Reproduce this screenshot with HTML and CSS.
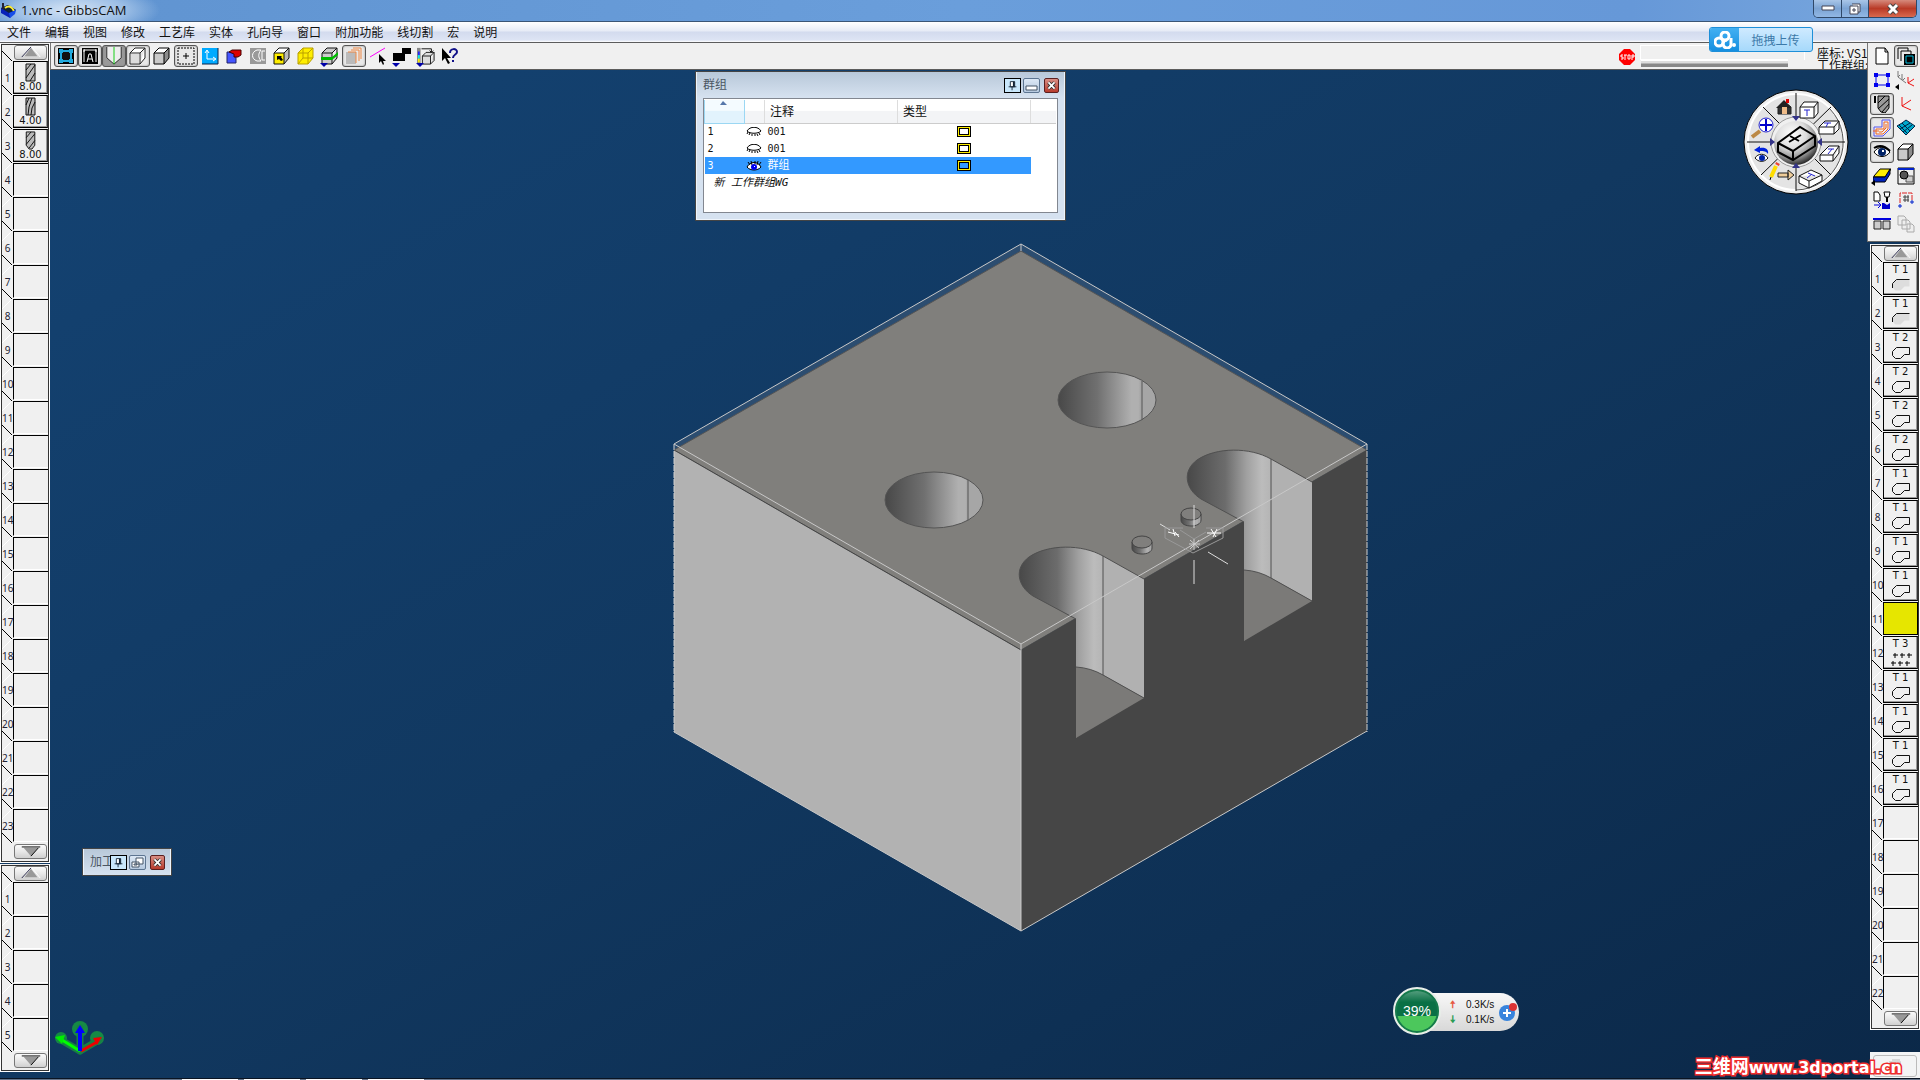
FILE: index.html
```html
<!DOCTYPE html>
<html lang="zh-CN">
<head>
<meta charset="utf-8">
<title>1.vnc - GibbsCAM</title>
<link rel="stylesheet" href="styles.css">
</head>
<body>
<svg class="defs" aria-hidden="true">
  <defs>
    <linearGradient id="bore"><stop offset="0" stop-color="#484848"/><stop offset=".4" stop-color="#707070"/><stop offset=".75" stop-color="#b0b0b0"/><stop offset=".82" stop-color="#b0b0b0"/><stop offset=".84" stop-color="#a6a6a6"/><stop offset="1" stop-color="#a6a6a6"/></linearGradient>
    <linearGradient id="slotwall" gradientUnits="userSpaceOnUse" x1="1019" y1="0" x2="1104" y2="0"><stop offset="0" stop-color="#484848"/><stop offset=".45" stop-color="#6c6c6c"/><stop offset=".7" stop-color="#a0a0a0"/><stop offset=".88" stop-color="#bcbcbc"/><stop offset="1" stop-color="#b4b4b4"/></linearGradient>
    <radialGradient id="ball" cx=".4" cy=".3" r=".75"><stop offset="0" stop-color="#fff"/><stop offset=".45" stop-color="#ddd"/><stop offset=".75" stop-color="#888"/><stop offset="1" stop-color="#111"/></radialGradient>
  </defs>
  <symbol id="cube" viewBox="0 0 18 18"><path d="M1 6h10v11H1z" fill="#c9c9c9"/><path d="M1 6l5-5h10l-5 5z" fill="#fff"/><path d="M11 6l5-5v10l-5 6z" fill="#8c8c8c"/><path d="M1 6h10v11H1zl5-5h10l-5 5M16 1v10l-5 6" fill="none" stroke="#000"/></symbol>
  <symbol id="up" viewBox="0 0 22 13"><path d="M11 2l7 9H4z" fill="#999"/><path d="M1 12L11 1" stroke="#224" fill="none"/><path d="M12 1l9 11" stroke="#fff" fill="none"/></symbol>
  <symbol id="down" viewBox="0 0 22 13"><path d="M3 2h16l-8 9z" fill="#999"/><path d="M1 1h20" stroke="#000"/><path d="M19 2l-8 9" stroke="#000"/></symbol>
  <symbol id="profile" viewBox="0 0 20 14"><path d="M5.500 1.500h13v7h-5l-4 4h-5l-3-3v-4z" fill="none" stroke="#111"/></symbol>
  <symbol id="profile-done" viewBox="0 0 20 14"><path d="M5.500 1.500h13v7h-5l-4 4h-5l-3-3v-4z" fill="#ddd"/><path d="M1.500 10v-4.500l4-4h13" fill="none" stroke="#111"/></symbol>
  <symbol id="pin" viewBox="0 0 17 15"><path d="M6 3h5v6H6zM4 9h9M8 9v4" fill="#fff" stroke="#123"/><path d="M9 3h2v6H9z" fill="#123"/></symbol>
  <symbol id="cross" viewBox="0 0 15 15"><path d="M4 4l7 7M11 4l-7 7" stroke="#333" stroke-width="4"/><path d="M4 4l7 7M11 4l-7 7" stroke="#fff" stroke-width="2"/></symbol>
  <symbol id="group" viewBox="0 0 14 11"><path d="M0 0h14v11H0z"/><path d="M1 1h12v9H1z" fill="#fe0"/><path d="M2 2h10v7H2z"/><path d="M3 3h8v5H3z" class="hole"/></symbol>
  <symbol id="shut" viewBox="0 0 16 10"><path d="M1 4c3-5 11-5 14 0-3 3-11 3-14 0zM2 5l-1 2m3-1L3 8m3-1v2m3-2v2m2-2l1 2m1-3l1 2" fill="none" stroke="#000"/></symbol>
  <symbol id="open" viewBox="0 0 16 10"><path d="M1 6c3-6 11-6 14 0-3 4-11 4-14 0z" fill="#fff" stroke="#000"/><path d="M2 1l2 3m1-4l1 4m3-4v3m3-3l-1 4m4-3l-2 3" stroke="#000"/><circle cx="8" cy="6" r="3" fill="#00e"/><path d="M8 5h1v1H8z" fill="#fff"/></symbol>
</svg>

<header class="titlebar">
  <svg class="app" width="16" height="17" viewBox="0 0 16 17"><path d="M1 6l7-3 8 5-6 8-9-5z" fill="#0720b8"/><path d="M1 6l7-3 8 5-7 3z" fill="#123"/><path d="M5 6c4-3 7-1 9 3" fill="none" stroke="#fe3" stroke-width="2"/><path d="M3 1v6" stroke="#223" stroke-width="2"/><path d="M9 11l7-3-1 4-5 4z" fill="#164de8"/></svg>
  <h1>1.vnc - GibbsCAM</h1>
  <div class="winctl">
    <button aria-label="最小化"><svg width="14" height="7" viewBox="0 0 14 7"><path d="M1 1h12v4H1z" fill="#fff" stroke="#445"/></svg></button>
    <button aria-label="还原"><svg width="12" height="12" viewBox="0 0 12 12"><path d="M3 1h8v8h-2M1 3h8v8H1zM4 6h2v2H4z" fill="#fff" stroke="#445"/></svg></button>
    <button class="close" aria-label="关闭"><svg width="14" height="12" viewBox="0 0 14 12"><path d="M3 2l8 8M11 2l-8 8" stroke="#444" stroke-width="5"/><path d="M3 2l8 8M11 2l-8 8" stroke="#fff" stroke-width="3"/></svg></button>
  </div>
</header>

<nav class="menubar">
  <button>文件</button><button>编辑</button><button>视图</button><button>修改</button><button>工艺库</button><button>实体</button><button>孔向导</button><button>窗口</button><button>附加功能</button><button>线切割</button><button>宏</button><button>说明</button>
</nav>

<button class="upload"><span class="cloud"><svg width="22" height="18" viewBox="0 0 22 18"><g fill="none" stroke="#fff" stroke-width="3"><circle cx="5" cy="11" r="4"/><circle cx="11" cy="5" r="4"/><path d="M13 9a4 4 0 1 0 4 5V7"/></g><circle cx="20" cy="14" r="2" fill="#fff"/></svg></span><span class="uptext">拖拽上传</span></button>

<main class="workspace">
  <aside class="dock">
    <section class="rack" aria-label="刀具">
      <div class="cap top"><i></i><button aria-label="上翻"><svg width="22" height="12"><use href="#up"/></svg></button></div>
      <ol>
        <li><b>1</b><button class="tile tool"><svg width="12" height="19" viewBox="0 0 12 19"><path d="M1 1h9v17H1z" fill="#bbb" stroke="#111"/><path d="M1 7l5-6M1 15L10 2M5 18l5-8" stroke="#111"/></svg>8.00</button></li>
        <li><b>2</b><button class="tile tool"><svg width="12" height="19" viewBox="0 0 12 19"><path d="M1 1h9v17H1z" fill="#bbb" stroke="#111"/><path d="M1 8l3-7M3 18l1-8 3-9M6 18l1-7 3-6" fill="none" stroke="#111"/></svg>4.00</button></li>
        <li><b>3</b><button class="tile tool"><svg width="12" height="19" viewBox="0 0 12 20"><path d="M1 1h9v14l-3 4H4l-3-4z" fill="#bbb" stroke="#111"/><path d="M1 7l5-6M1 14L10 3M4 18l6-8" stroke="#111"/></svg>8.00</button></li>
        <li><b>4</b><button class="tile" aria-label="刀具 4"></button></li>
        <li><b>5</b><button class="tile" aria-label="刀具 5"></button></li>
        <li><b>6</b><button class="tile" aria-label="刀具 6"></button></li>
        <li><b>7</b><button class="tile" aria-label="刀具 7"></button></li>
        <li><b>8</b><button class="tile" aria-label="刀具 8"></button></li>
        <li><b>9</b><button class="tile" aria-label="刀具 9"></button></li>
        <li><b>10</b><button class="tile" aria-label="刀具 10"></button></li>
        <li><b>11</b><button class="tile" aria-label="刀具 11"></button></li>
        <li><b>12</b><button class="tile" aria-label="刀具 12"></button></li>
        <li><b>13</b><button class="tile" aria-label="刀具 13"></button></li>
        <li><b>14</b><button class="tile" aria-label="刀具 14"></button></li>
        <li><b>15</b><button class="tile" aria-label="刀具 15"></button></li>
        <li><b>16</b><button class="tile" aria-label="刀具 16"></button></li>
        <li><b>17</b><button class="tile" aria-label="刀具 17"></button></li>
        <li><b>18</b><button class="tile" aria-label="刀具 18"></button></li>
        <li><b>19</b><button class="tile" aria-label="刀具 19"></button></li>
        <li><b>20</b><button class="tile" aria-label="刀具 20"></button></li>
        <li><b>21</b><button class="tile" aria-label="刀具 21"></button></li>
        <li><b>22</b><button class="tile" aria-label="刀具 22"></button></li>
        <li><b>23</b><button class="tile" aria-label="刀具 23"></button></li>
      </ol>
      <div class="cap"><i></i><button aria-label="下翻"><svg width="22" height="12"><use href="#down"/></svg></button></div>
    </section>
    <section class="rack" aria-label="工序">
      <div class="cap top"><i></i><button aria-label="上翻"><svg width="22" height="12"><use href="#up"/></svg></button></div>
      <ol>
        <li><b>1</b><button class="tile" aria-label="工序 1"></button></li>
        <li><b>2</b><button class="tile" aria-label="工序 2"></button></li>
        <li><b>3</b><button class="tile" aria-label="工序 3"></button></li>
        <li><b>4</b><button class="tile" aria-label="工序 4"></button></li>
        <li><b>5</b><button class="tile" aria-label="工序 5"></button></li>
      </ol>
      <div class="cap"><i></i><button aria-label="下翻"><svg width="22" height="12"><use href="#down"/></svg></button></div>
    </section>
  </aside>

  <div class="center">
    <div class="toolbar">
      <div class="tools">
        <button class="on" aria-label="工作群组"><svg viewBox="0 0 18 18"><path d="M1 1h16v16H1z"/><path d="M4 4h10v10H4z" fill="#111" stroke="#2ad" stroke-width="2"/><path d="M2 2h4v4H2zm10 0h4v4h-4zM2 12h4v4H2zm10 0h4v4h-4z" fill="#2ad"/></svg></button>
        <button class="on" aria-label="标注"><svg viewBox="0 0 18 18"><path d="M1 1h16v16H1z"/><path d="M3 15V3h12v12M3 2v3m12-3v3M6 15l2-8h2l2 8M7 12h4" fill="none" stroke="#fff"/></svg></button>
        <button class="on grey" aria-label="刀尖"><svg viewBox="0 0 18 20"><path d="M1 0v12l8 7 8-7V0z" fill="#eee"/><path d="M1 0v12l8 7 8-7V0" fill="none" stroke="#222"/><path d="M9 0v19" stroke="#0c0"/></svg></button>
        <button class="on" aria-label="透明体"><svg viewBox="0 0 18 18"><path d="M1 6h10v11H1zl5-5h10l-5 5M16 1v10l-5 6" fill="#fff" stroke="#222"/><path d="M2 7h8v9H2z" fill="#ddd"/></svg></button>
        <button aria-label="实体"><svg><use href="#cube"/></svg></button>
        <button class="on" aria-label="中心"><svg viewBox="0 0 18 18"><path d="M1 1h16v16H1z" fill="none" stroke="#000" stroke-dasharray="2 1"/><path d="M9 6v6M6 9h6" stroke="#000"/></svg></button>
        <button aria-label="坐标系"><svg viewBox="0 0 18 18"><path d="M1 1h16v16H1z" fill="#0af"/><path d="M6 4v8h8M4 6l2-3 2 3m4 4l3 2-3 2" fill="none" stroke="#fff"/><path d="M1 17h16V1" fill="none" stroke="#124"/></svg></button>
        <button aria-label="渲染"><svg viewBox="0 0 18 18"><path d="M2 5h9v11H2z" fill="#45f" stroke="#226"/><path d="M4 5l3-2h9v5l-3 2H9V7z" fill="#d00" stroke="#400"/></svg></button>
        <button aria-label="工序"><svg viewBox="0 0 18 18"><path d="M1 1h16v16H1z" fill="#999"/><path d="M16 4h-3v9h3M12 3H8c-6 2-6 9 0 11h4c-3-4-3-7 0-11z" fill="none" stroke="#fff"/></svg></button>
        <button aria-label="选择体"><svg viewBox="0 0 18 18"><path d="M1 6l5-5h10l-5 5z" fill="#fff"/><path d="M11 6l5-5v10l-5 6z" fill="#bbb"/><path d="M1 6h10v11H1z" fill="#fe0"/><path d="M1 6h10v11H1zl5-5h10l-5 5M16 1v10l-5 6" fill="none" stroke="#111"/><path d="M4 9h5l-1 1 2 3-2 1-2-2-2 1z"/></svg></button>
        <button aria-label="线框体"><svg viewBox="0 0 18 18"><path d="M1 6l5-5h10v10l-5 6H1z" fill="#fe0"/><path d="M1 6h10v11H1zl5-5h10l-5 5M16 1v10l-5 6M6 1v10h10M6 11l-5 6" fill="none" stroke="#b9a000"/></svg></button>
        <button class="more" aria-label="切片"><svg viewBox="0 0 18 18"><path d="M1 6h10v11H1zl5-5h10l-5 5M16 1v10l-5 6" fill="#ccc" stroke="#111"/><path d="M0 10h11l6-5v3l-6 5H0z" fill="#0b0"/></svg></button>
        <button class="on" aria-label="层"><svg viewBox="0 0 18 18"><path d="M1 5h10v12H1z" fill="#bbb"/><path d="M3 5h8v11M6 3h8v11M8 1h8v11" fill="none" stroke="#e84"/></svg></button>
        <button aria-label="选线"><svg viewBox="0 0 18 18"><path d="M1 10L16 1" stroke="#f0f"/><path d="M10 7v9l2-2 2 4 1-1-1-3h3z"/></svg></button>
        <button class="more" aria-label="窗口"><svg viewBox="0 0 18 18"><path d="M0 6h12v8H0zM9 1h9v6H9z"/></svg></button>
        <button class="more" aria-label="色谱"><svg viewBox="0 0 20 20"><path d="M0 1h4v18H0z" fill="#888"/><path d="M1 5h2v4H1z" fill="#22f"/><path d="M1 9h2v4H1z" fill="#0ee"/><path d="M1 13h2v4H1z" fill="#fe0"/><path d="M5 2h11v4M14 4l2 2 2-2" fill="none" stroke="#000"/><path d="M6 10h9v9H6zl4-4h9l-4 4M19 6v9l-4 4" fill="#ddd" stroke="#111"/></svg></button>
        <button aria-label="帮助"><svg viewBox="0 0 18 18"><path d="M1 1v13l3-3 3 6 2-1-3-5h4z"/><path d="M9 6c0-5 7-5 7-1 0 3-4 2-4 6m0 2v2" fill="none" stroke="#118" stroke-width="2"/></svg></button>
      </div>
      <div class="status">
        <svg class="stop" width="16" height="16" viewBox="0 0 16 16"><path d="M5 0h6l5 5v6l-5 5H5l-5-5V5z" fill="#f00"/><path d="M4 6H2v2h2v2H2m3-4h3M6 6v5m3-5h2v4H9zm4 5V6h2v2h-2" fill="none" stroke="#fff"/></svg>
        <div class="progress"><i></i></div>
        <p>座标: VS1<br>工作群组:</p>
      </div>
    </div>

    <div class="viewport">
      <svg class="scene" viewBox="50 70 1817 1008" role="img" aria-label="零件">
        <defs>
          <g id="pocket">
            <path d="M1076 619L1033 596C1017 586 1014 568 1029 557 1048 544 1082 544 1103 556V675L1076 738z" fill="url(#slotwall)"/>
            <path d="M1103 556l41 23v119l-41-23z" fill="#b1b1b1"/>
            <path d="M1076 667q15 1 27 8l41 23-68 40z" fill="#7b7a78"/>
            <path d="M1076 619L1033 596C1017 586 1014 568 1029 557 1048 544 1082 544 1103 556l41 23M1103 556v119M1076 667q15 1 27 8l41 23" fill="none" stroke="#505050"/>
          </g>
          <g id="boss"><path d="M1132 542v6c0 8 20 8 20 0v-6" fill="url(#bore)" stroke="#444"/><ellipse cx="1142" cy="542" rx="10" ry="6" fill="#807f7d" stroke="#444"/></g>
        </defs>
        <path d="M1021 244l346 200v8H674v-8z" fill="#2c4d70"/>
        <path d="M1021 251l346 199-346 200-347-200z" fill="#807f7c" stroke="#555"/>
        <path d="M674 450l347 200v281L674 732z" fill="#b2b2b2"/>
        <path d="M1021 650l346-200v281l-346 200z" fill="#464646"/>
        <path d="M674 450l347 200" stroke="#444"/>
        <ellipse cx="1107" cy="400" rx="49" ry="28" fill="url(#bore)" stroke="#555"/><path d="M1142 381v39" stroke="#555"/>
        <ellipse cx="934" cy="500" rx="49" ry="28" fill="url(#bore)" stroke="#555"/><path d="M968 480v40" stroke="#555"/>
        <use href="#pocket"/><use href="#pocket" x="168" y="-97"/>
        <use href="#boss"/><use href="#boss" x="49" y="-28"/>
        <path d="M1021 244l346 200-346 200-347-200zM1021 244v7M1021 644v287" fill="none" stroke="#c8c8c8"/>
        <path d="M674 732l347 199 346-200" fill="none" stroke="#c8c8c8"/>
        <path d="M674 444v288M1367 444v288" stroke="#d0d0d0" stroke-dasharray="6 1"/>
        <path d="M1194 505v23M1194 560v24M1160 524l10 6M1208 552l20 12" stroke="#ddd"/>
        <path d="M1165 538v-10h18M1165 538l28 15 30-15v-10h-17M1180 530l14 9 12-7" fill="none" stroke="#999"/>
        <path d="M1168 532l11 3M1173 529l2 7M1175 532l4 5M1207 533h14M1211 529l5 8M1217 529l-4 8" stroke="#fff"/>
        <path d="M1189 544h11M1190 540l9 8M1199 540l-9 9M1194 539v11" stroke="#ccc"/>
      </svg>

      <section class="palette groups">
        <header><h2>群组</h2><button class="pin" aria-label="固定"><svg width="15" height="13"><use href="#pin"/></svg></button><button aria-label="最小化"><svg width="13" height="13" viewBox="0 0 13 13"><path d="M1 7h11v4H1z" fill="#fff" stroke="#456"/></svg></button><button class="close" aria-label="关闭"><svg width="13" height="13"><use href="#cross"/></svg></button></header>
        <div class="list">
          <table>
            <thead><tr><th class="c1"><svg width="7" height="4" viewBox="0 0 7 4"><path d="M0 4l3-4 4 4z" fill="#57a"/></svg></th><th class="c2"></th><th class="c3">注释</th><th class="c4">类型</th><th></th></tr></thead>
            <tbody>
              <tr><td>1</td><td><svg width="16" height="10"><use href="#shut"/></svg></td><td>001</td><td class="kind"><svg width="14" height="11"><use href="#group"/></svg></td></tr>
              <tr><td>2</td><td><svg width="16" height="10"><use href="#shut"/></svg></td><td>001</td><td class="kind"><svg width="14" height="11"><use href="#group"/></svg></td></tr>
              <tr class="picked"><td>3</td><td><svg width="16" height="10"><use href="#open"/></svg></td><td>群组</td><td class="kind"><svg width="14" height="11"><use href="#group"/></svg></td></tr>
              <tr class="new"><td colspan="4">新 工作群组WG</td></tr>
            </tbody>
          </table>
        </div>
      </section>

      <section class="palette mini">
        <header><h2>加工</h2><button class="pin" aria-label="固定"><svg width="15" height="13"><use href="#pin"/></svg></button><button aria-label="还原"><svg width="13" height="13" viewBox="0 0 13 13"><path d="M5 2h7v6H5zM1 6h7v5H1zM3 8h3v1H3z" fill="#fff" stroke="#456"/></svg></button><button class="close" aria-label="关闭"><svg width="13" height="13"><use href="#cross"/></svg></button></header>
      </section>

      <svg class="wheel" width="106" height="106" viewBox="0 0 106 106" role="img" aria-label="视图轮">
        <circle cx="53" cy="53" r="52" fill="#eee" stroke="#000"/><circle cx="53" cy="53" r="48" fill="#e4e4e4" stroke="#fff" stroke-width="2"/>
        <path d="M87 20a48 48 0 0 1-34 81" fill="none" stroke="#555" stroke-width="1"/>
        <path d="M53 4v98M4 53h98M20 18l68 68M88 18L18 86" stroke="#111"/>
        <circle cx="53" cy="53" r="25" fill="#f0f0f0" stroke="#999"/><circle cx="53" cy="54" r="22" fill="url(#ball)"/>
        <path d="M35 54l22-16 15 9v10L50 71 35 63zl15 8 22-15M50 62v9" fill="none" stroke="#000" stroke-width="2"/><path d="M46 53l12-7M47 47l9 5" stroke="#000" stroke-width="2"/>
        <path d="M49 27h8l-4 5zM49 79h8l-4-5zM27 49v8l5-4zM79 49v8l-5-4z" fill="#338"/>
        <path d="M35 18l6-6 7 6v7H35z" fill="#333" stroke="#222"/><path d="M33 19l8-8 7 8z" fill="#222"/><path d="M43 10h3v4h-3z" fill="#d00"/><path d="M39 18h5v7h-5z" fill="#eb8"/>
        <g fill="#fff" stroke="#111"><path d="M57 18h14v11H57zl4-5h14l-4 5M75 13v11l-4 5"/><path d="M76 38h15v7H76zl6-6h14l-5 6M96 32v8l-5 5"/><path d="M77 66h13v6H77zl9-9h10l-6 9M96 57v7l-6 8"/><path d="M56 87l12-6 11 5v6l-13 7-10-5zl10 5 13-6M66 92v7"/></g>
        <path d="M61 21h6m-3 0v6M81 34h7m-3 0l-2 4M85 60h6m-2 0l-4 5M65 84l7 3m-3-2l-5 4" stroke="#22c"/>
        <circle cx="23" cy="36" r="7" fill="#fff" stroke="#22c"/><path d="M23 30v12M17 36h12" stroke="#00c" stroke-width="2"/><path d="M17 42l-8 6" stroke="#b84" stroke-width="4"/>
        <path d="M11 61l6-4v2c6-1 9 2 8 6-2-3-4-3-8-3v2z" fill="#02d"/><path d="M12 69c3-5 10-5 13 0-4 5-10 4-13 0z" fill="#fff" stroke="#111"/><circle cx="19" cy="69" r="3" fill="#02a"/>
        <path d="M28 88l5-11" stroke="#fd0" stroke-width="4"/><path d="M27 91l1-3" stroke="#000"/><path d="M34 76l1-2" stroke="#e43" stroke-width="4"/><path d="M35 84h10v4H35zM45 81l6 5-6 5z" fill="#ec9" stroke="#222"/>
      </svg>

      <svg class="triad" width="56" height="38" viewBox="0 0 56 38" role="img" aria-label="坐标轴"><g fill="#168a45"><circle cx="9" cy="18" r="6"/><circle cx="28" cy="9" r="8"/><circle cx="45" cy="18" r="7"/></g><path d="M28 31V8M28 31L9 20M28 31l19-11" stroke="#187f45" stroke-width="7" stroke-linecap="round"/><path d="M28 31L10 20" stroke="#0f0" stroke-width="3"/><path d="M3 17l10-2-3 9z" fill="#0e0"/><path d="M29 31l16-9" stroke="#e00" stroke-width="3"/><path d="M41 18l9-1-5 8z" fill="#e00"/><path d="M28 31V12" stroke="#00f" stroke-width="4"/><path d="M28 5l5 8H23z" fill="#00f"/></svg>

      <div class="speed">
        <div class="gauge">39%</div>
        <div class="rates"><p><i class="rise">🠅</i>0.3K/s</p><p><i class="fall">🠇</i>0.1K/s</p></div>
        <button aria-label="加速"><svg width="20" height="20" viewBox="0 0 20 20"><circle cx="9" cy="11" r="8" fill="#3884dd"/><path d="M9 7v8M5 11h8" stroke="#fff" stroke-width="2"/><circle cx="15" cy="5" r="4" fill="#d33"/></svg></button>
      </div>
    </div>
  </div>

  <aside class="side">
    <div class="palette-grid">
      <button aria-label="新建"><svg viewBox="0 0 18 18"><path d="M3 1h9l3 4v12H3zM12 1v4h3" fill="#fff" stroke="#000"/></svg></button>
      <button class="on" aria-label="群组"><svg viewBox="0 0 18 18"><path d="M1 12V1h10v3M4 14V4h10v3" fill="none" stroke="#000"/><path d="M7 7h11v11H7z"/><path d="M9 9h7v7H9z" stroke="#0bd"/></svg></button>
      <button aria-label="几何"><svg viewBox="0 0 18 18"><path d="M3 4h12v10H3z" fill="none" stroke="#00e"/><path d="M1 2h4v4H1zm12 0h4v4h-4zM1 12h4v4H1zm12 0h4v4h-4z" fill="#00e"/></svg></button>
      <button class="back" aria-label="坐标列表"><svg viewBox="0 0 18 18"><path d="M1 0v6l4 3M5 3v6l4 3M3 4L1 6m7 1L6 9" fill="none" stroke="#777"/><path d="M11 6v6l6 3M11 12l6-4" fill="none" stroke="#e11"/></svg></button>
      <button class="on" aria-label="刀具"><svg viewBox="0 0 18 18"><path d="M5 1h11v12l-4 5-4-1-3-4z" fill="#999" stroke="#000"/><path d="M5 8l7-7M5 14L16 4M9 17l7-8" stroke="#000"/><path d="M2 1v7" stroke="#000" stroke-width="2"/></svg></button>
      <button aria-label="坐标系"><svg viewBox="0 0 18 18"><path d="M5 2v9l9 4M5 11l9-6" fill="none" stroke="#e11"/></svg></button>
      <button class="on" aria-label="加工"><svg viewBox="0 0 18 18"><path d="M1 8h8V1h8v9l-7 7H1z" fill="#eee" stroke="#55e"/><path d="M3 15v-5h8V3h4v7l-5 5zM6 13h3l4-4V5M0 12h6" fill="none" stroke="#e62"/></svg></button>
      <button aria-label="曲面"><svg viewBox="0 0 18 18"><path d="M0 7l5-3 4-3 9 6-9 9z" fill="#0ac" stroke="#024"/><path d="M3 10l10-6M6 13l9-7M5 4l8 8M2 6l8 8" stroke="#024"/></svg></button>
      <button class="on" aria-label="显示"><svg viewBox="0 0 18 18"><path d="M1 9c4-6 11-6 16 0-4 6-12 6-16 0z" fill="#fff" stroke="#000"/><path d="M1 5c5-3 11-2 16 3" fill="none" stroke="#000" stroke-width="2"/><circle cx="9" cy="9" r="4" fill="#026"/><path d="M9 7h2v2H9z" fill="#fff"/></svg></button>
      <button aria-label="实体"><svg><use href="#cube"/></svg></button>
      <button class="back" aria-label="毛坯"><svg viewBox="0 0 18 18"><path d="M1 9l6-7h11l-5 8H1z" fill="#fe0" stroke="#000"/><path d="M0 10h12l5-8v5l-5 8H0z" fill="#02b" stroke="#000"/></svg></button>
      <button aria-label="仿真"><svg viewBox="0 0 18 18"><path d="M1 1h16v16H1z" fill="#eee" stroke="#000"/><path d="M1 1h16v2H1z" fill="#02c"/><path d="M9 9h7v6H9z" fill="#ccc" stroke="#555"/><circle cx="7" cy="8" r="4" fill="#555" stroke="#000"/></svg></button>
      <button aria-label="后处理"><svg viewBox="0 0 18 18"><path d="M1 1h4l2 3v6H1zM11 1h6l-1 5h-4z" fill="#fff" stroke="#000"/><path d="M13 6h2v5h-2z"/><path d="M1 14h6M5 11l3 3-3 3" stroke="#00d" fill="none"/><path d="M9 12h2l3 2 3-2v6H9z" fill="#00c"/></svg></button>
      <button aria-label="测量"><svg viewBox="0 0 18 18"><path d="M3 12V2h12v8" fill="none" stroke="#d22" stroke-dasharray="5 1"/><path d="M6 6h6M6 9h6M8 4v7M11 4v7" stroke="#444"/><path d="M1 15h4M3 13v4M13 11h4M15 9v4" stroke="#02c"/></svg></button>
      <button aria-label="双窗"><svg viewBox="0 0 18 18"><path d="M0 4h18" stroke="#00d" stroke-width="2"/><path d="M1 6h7v8H1zm9 0h7v8h-7z" fill="#ccc" stroke="#222"/></svg></button>
      <button aria-label="复制"><svg viewBox="0 0 18 18"><path d="M1 1h6l2 2v7H1zM5 5h6l2 2v7H5zM10 9h5l2 2v6h-7z" fill="#eee" stroke="#aaa"/></svg></button>
    </div>
    <section class="rack ops" aria-label="加工操作">
      <div class="cap top"><i></i><button aria-label="上翻"><svg width="22" height="12"><use href="#up"/></svg></button></div>
      <ol>
        <li><b>1</b><button class="tile op">T 1<svg width="20" height="14"><use href="#profile-done"/></svg></button></li>
        <li><b>2</b><button class="tile op">T 1<svg width="20" height="14"><use href="#profile-done"/></svg></button></li>
        <li><b>3</b><button class="tile op">T 2<svg width="20" height="14"><use href="#profile"/></svg></button></li>
        <li><b>4</b><button class="tile op">T 2<svg width="20" height="14"><use href="#profile"/></svg></button></li>
        <li><b>5</b><button class="tile op">T 2<svg width="20" height="14"><use href="#profile"/></svg></button></li>
        <li><b>6</b><button class="tile op">T 2<svg width="20" height="14"><use href="#profile"/></svg></button></li>
        <li><b>7</b><button class="tile op">T 1<svg width="20" height="14"><use href="#profile"/></svg></button></li>
        <li><b>8</b><button class="tile op">T 1<svg width="20" height="14"><use href="#profile"/></svg></button></li>
        <li><b>9</b><button class="tile op">T 1<svg width="20" height="14"><use href="#profile"/></svg></button></li>
        <li><b>10</b><button class="tile op">T 1<svg width="20" height="14"><use href="#profile"/></svg></button></li>
        <li><b>11</b><button class="tile current" aria-label="操作 11"></button></li>
        <li><b>12</b><button class="tile op">T 3<svg width="22" height="14" viewBox="0 0 22 14"><path d="M3 3h5m2 0h5m2 0h5M5 1v5m7-5v5m7-5v5M1 11h5m2 0h5m2 0h5M3 9v5m7-5v5m7-5v5" stroke="#000"/></svg></button></li>
        <li><b>13</b><button class="tile op">T 1<svg width="20" height="14"><use href="#profile"/></svg></button></li>
        <li><b>14</b><button class="tile op">T 1<svg width="20" height="14"><use href="#profile"/></svg></button></li>
        <li><b>15</b><button class="tile op">T 1<svg width="20" height="14"><use href="#profile"/></svg></button></li>
        <li><b>16</b><button class="tile op">T 1<svg width="20" height="14"><use href="#profile"/></svg></button></li>
        <li><b>17</b><button class="tile" aria-label="操作 17"></button></li>
        <li><b>18</b><button class="tile" aria-label="操作 18"></button></li>
        <li><b>19</b><button class="tile" aria-label="操作 19"></button></li>
        <li><b>20</b><button class="tile" aria-label="操作 20"></button></li>
        <li><b>21</b><button class="tile" aria-label="操作 21"></button></li>
        <li><b>22</b><button class="tile" aria-label="操作 22"></button></li>
      </ol>
      <div class="cap"><i></i><button aria-label="下翻"><svg width="22" height="12"><use href="#down"/></svg></button></div>
    </section>
    <div class="trash"><button disabled aria-label="删除"><svg width="14" height="14" viewBox="0 0 14 14"><path d="M1 3h12M4 1h8M3 3l1 10h8V3M6 6v5m2-5v5m2-5v5" fill="none" stroke="#bbb"/></svg></button></div>
  </aside>
</main>

<footer class="taskbar"><i></i><i></i><i></i><i></i></footer>
<p class="mark"><span>三维网</span>www.3dportal.cn</p>
</body>
</html>
```
FILE: styles.css
```css
* { box-sizing: border-box; }
body {
  margin: 0; min-height: 100vh; position: relative; overflow: hidden;
  display: grid; grid-template-rows: auto auto 1fr auto;
  font: 12px/14px "Noto Sans", "Noto Sans CJK SC", sans-serif; color: #111;
  background: linear-gradient(to bottom right, #144475, #113860 50%, #0b2848);
}
h1, h2, p, ol { margin: 0; padding: 0; font-weight: normal; font-size: 12px; }
ol { list-style: none; }
button { font: inherit; color: inherit; padding: 0; margin: 0; border: 0; background: none; display: flex; align-items: center; justify-content: center; }
svg { display: block; flex: none; }
.defs { position: absolute; width: 0; height: 0; }

.titlebar {
  display: flex; align-items: flex-start; height: 22px; border-bottom: 1px solid #3b5676;
  background: radial-gradient(ellipse 90px 26px at 70px 10px, #d5e4f5, #9dbfe6 60%, transparent), linear-gradient(90deg, #5f93d0, #6a9edb 50%, #6698d8 85%, #7aa8de);
}
.titlebar .app { margin-top: 2px; }
.titlebar h1 { font-family: "Open Sans", sans-serif; font-size: 13px; line-height: 20px; margin-left: 5px; }
.winctl { margin-left: auto; margin-right: 3px; display: flex; height: 18px; border: 1px solid #2f4868; border-top: 0; border-radius: 0 0 5px 5px; overflow: hidden; }
.winctl button { width: 28px; border-right: 1px solid #2f4868; background: linear-gradient(#a9c6e8, #7ba3d3 50%, #92b8e4); }
.winctl button:nth-child(2) { width: 27px; }
.winctl .close { width: 47px; border: 0; background: linear-gradient(#d68a7c, #b93a26 50%, #d9694e); }

.menubar { display: flex; height: 21px; padding-bottom: 1px; border-bottom: 1px solid #5c5c5c; background: linear-gradient(#fff, #e6ebf6 45%, #d3dbee 50%, #dde4f4 90%, #fff); }
.menubar button { padding: 0 7px; font-family: "Noto Sans CJK SC", sans-serif; }

.upload { position: absolute; z-index: 2; top: 27px; right: 107px; height: 25px; border: 1px solid #1e8fd8; border-radius: 3px; overflow: hidden; background: linear-gradient(#cfeaff, #a6d9fb); }
.cloud { width: 29px; height: 23px; display: grid; place-items: center; background: linear-gradient(#43b0f2, #158fe0); }
.uptext { width: 73px; color: #3c79a8; text-align: center; font-family: "Noto Sans CJK SC", sans-serif; }

.workspace { display: grid; grid-template-columns: 50px minmax(0, 1fr) 53px; min-height: 0; }
.dock, .side, .center { display: flex; flex-direction: column; min-width: 0; }

.rack { background: #f0f0f0; border: 1px solid #fff; border-top: 0; outline: 1px solid #333; outline-offset: -2px; padding: 0 1px 2px; margin-bottom: 1px; }
.rack li, .cap { display: grid; grid-template-columns: 11px 1fr; height: 34px; }
.rack b {
  font: 10px/12px "Noto Sans", sans-serif; align-self: stretch; display: grid; place-items: center; color: #223;
  background:
    linear-gradient(to top right, transparent 46%, #000 47%, #000 53%, transparent 54%) 0 100% / 10px 10px no-repeat,
    linear-gradient(to bottom right, transparent 46%, #fff 47%, #fff 53%, transparent 54%) 0 0 / 10px 10px no-repeat;
}
.tile { width: 100%; height: 33px; border: solid #000; border-width: 1px 0 0 1px; border-bottom: 1px solid #fff; flex-direction: column; }
.tool, .op { border: 1px solid #000; border-right: 1px solid #333; box-shadow: inset -1px -1px #999; font: 10px/10px "DejaVu Sans", sans-serif; }
.tool { padding-bottom: 1px; }
.op { gap: 3px; }
.current { background: #e6e600; border: 1px solid #000; }
.cap { height: 17px; }
.cap.top { height: 18px; }
.cap button { height: 15px; align-self: center; margin: 0 1px; border: 1px solid #777; border-radius: 3px; background: linear-gradient(#fafafa, #e8e8e8 50%, #d0d0d0); }
.cap.top i { background: linear-gradient(to top right, transparent 46%, #000 47%, #000 53%, transparent 54%) 0 100% / 10px 10px no-repeat; }

.toolbar { display: flex; height: 27px; background: #f0f0f0; border-bottom: 1px solid #5c5c5c; border-left: 1px solid #777; overflow: hidden; }
.tools { display: flex; padding: 2px 0 2px 3px; }
.tools button, .palette-grid button { width: 24px; height: 22px; border: 1px solid transparent; border-radius: 3px; position: relative; }
.tools button.on, .palette-grid button.on { border-color: #555; background: #e8e8e8; box-shadow: inset 0 0 2px #888; }
.tools button.grey { background: #999; }
.tools svg, .palette-grid svg { width: 18px; height: 18px; }
.more::after { content: ""; position: absolute; left: 1px; bottom: -1px; border: solid transparent; border-width: 4px 4px 0; border-top-color: #00a; }
.back::after { content: ""; position: absolute; left: 0; bottom: 0; border: solid transparent; border-width: 3px 4px 3px 0; border-right-color: #000; }
.status { margin-left: auto; display: flex; }
.stop { margin: 6px 5px 0 0; }
.progress { width: 165px; height: 15px; margin: 2px 12px 0 0; border: 1px solid #fff; border-bottom: 0; }
.progress i { display: block; width: 147px; height: 8px; margin-top: 13px; background: linear-gradient(#fff 0 2px, #ddd 2px 4px, #888 5px); }
.status p { width: 50px; margin-top: 4px; font: 12px/12px "Noto Sans CJK SC", sans-serif; white-space: nowrap; overflow: hidden; }

.viewport { position: relative; flex: 1; }
.scene { position: absolute; inset: 0; width: 100%; height: 100%; }

.palette { position: absolute; border: 1px solid #444; background: #d6e2f0; box-shadow: inset 0 0 0 1px #eef4fb; padding: 0 7px; }
.palette header { display: flex; align-items: center; gap: 2px; height: 26px; margin: 0 -6px; padding: 0 5px 0 6px; background: linear-gradient(#b8c8d9, #d6e2f0); }
.palette h2 { flex: 1; color: #4b5663; line-height: 14px; min-width: 0; white-space: nowrap; }
.palette header button { position: relative; flex: none; width: 17px; height: 15px; border: 1px solid #5d7591; border-radius: 2px; background: linear-gradient(#dce8f5, #b6c9df); }
.palette header .pin { border: 1px solid #000; border-radius: 0; background: #c9e7fb; }
.palette header .close { width: 15px; margin-left: 2px; border-color: #5b2020; background: linear-gradient(#d98e84, #b73b2c); }
.groups { left: 645px; top: 1px; width: 371px; height: 150px; }
.mini { left: 32px; top: 778px; width: 90px; }
.list { height: 115px; border: 1px solid #828790; background: #fff; padding: 1px 1px 1px 0; }
table { border-collapse: collapse; table-layout: fixed; width: 100%; }
th { height: 23px; padding: 0 0 0 5px; font: 12px/14px "Noto Sans CJK SC", sans-serif; text-align: left; border-right: 1px solid #ddd; border-bottom: 1px solid #ccc; background: linear-gradient(#fff 45%, #f3f4f6 50%); }
th:last-child { border-right: 0; }
.c1 { width: 40px; background: linear-gradient(#f4fbff 45%, #e2f3fd 50%); border: 1px solid #9bd7f3; border-top: 0; vertical-align: top; }
.c1 svg { margin: 1px 0 0 10px; }
.c2 { width: 20px; }
.c3, .c4 { width: 133px; }
td { height: 17px; padding: 0 3px; font: 10px/14px "DejaVu Sans Mono", "Noto Sans CJK SC", monospace; }
td:nth-child(2) { padding: 0 1px; }
.kind svg { margin-left: 56px; }
.picked td { background: #39f; color: #fff; }
.picked td:nth-child(3) { font-size: 11px; }
.picked .kind { --hole: #39f; }
.hole { fill: var(--hole, #fff); }
.new td { font-size: 11px; font-style: italic; padding-left: 9px; }

.wheel { position: absolute; right: 18px; top: 19px; }
.triad { position: absolute; left: 2px; bottom: 20px; }

.speed { position: absolute; right: 348px; bottom: 47px; width: 120px; height: 38px; padding-left: 54px; display: flex; align-items: center; border-radius: 0 19px 19px 0; }
.speed::before { content: ""; position: absolute; inset: 0 0 0 30px; border-radius: 0 19px 19px 0; background: linear-gradient(#f8f8f8, #d8d8d8); }
.gauge { position: absolute; left: -6px; top: -6px; width: 48px; height: 48px; border: 2px solid #e8eee9; border-radius: 50%; display: grid; place-items: center; font: 14px/14px "Liberation Sans", sans-serif; color: #fff; background: linear-gradient(#5fa486, #0a7045 30%, #0a7045 62%, #4cc75c 62%); box-shadow: inset 0 0 0 2px #157a4c; }
.rates { position: relative; font: 10px/15px "Liberation Sans", sans-serif; }
.rates p { display: flex; font-size: 10px; }
.rates i { width: 16px; margin-left: -3px; font: bold 10px/15px "DejaVu Sans", sans-serif; }
.rise { color: #e65a43; }
.fall { color: #2a9c54; }
.speed button { position: relative; margin-left: 4px; }

.palette-grid { display: grid; grid-template-columns: 24px 24px; grid-auto-rows: 24px; padding: 2px 0 4px 2px; background: #f0f0f0; border-left: 1px solid #777; border-bottom: 1px solid #666; }
.ops { margin: 2px 0 0 3px; }
.trash { margin: auto 0 0 3px; padding: 3px; height: 26px; background: #f3f4f5; }
.trash button { width: 100%; height: 22px; border: 1px solid #bbb; border-radius: 3px; }

.taskbar { height: 2px; display: flex; gap: 6px; padding: 1px 0 0 182px; background: linear-gradient(#0a1422 50%, #66758a 50%); }
.taskbar i { width: 56px; background: #fff; }
.mark { position: absolute; right: 18px; bottom: 3px; font: bold 16px/18px "DejaVu Sans", sans-serif; color: #fff; -webkit-text-stroke: 3px #ee2b2b; paint-order: stroke; white-space: nowrap; }
.mark span { font: bold 18px/18px "Noto Sans CJK SC", sans-serif; }
```
